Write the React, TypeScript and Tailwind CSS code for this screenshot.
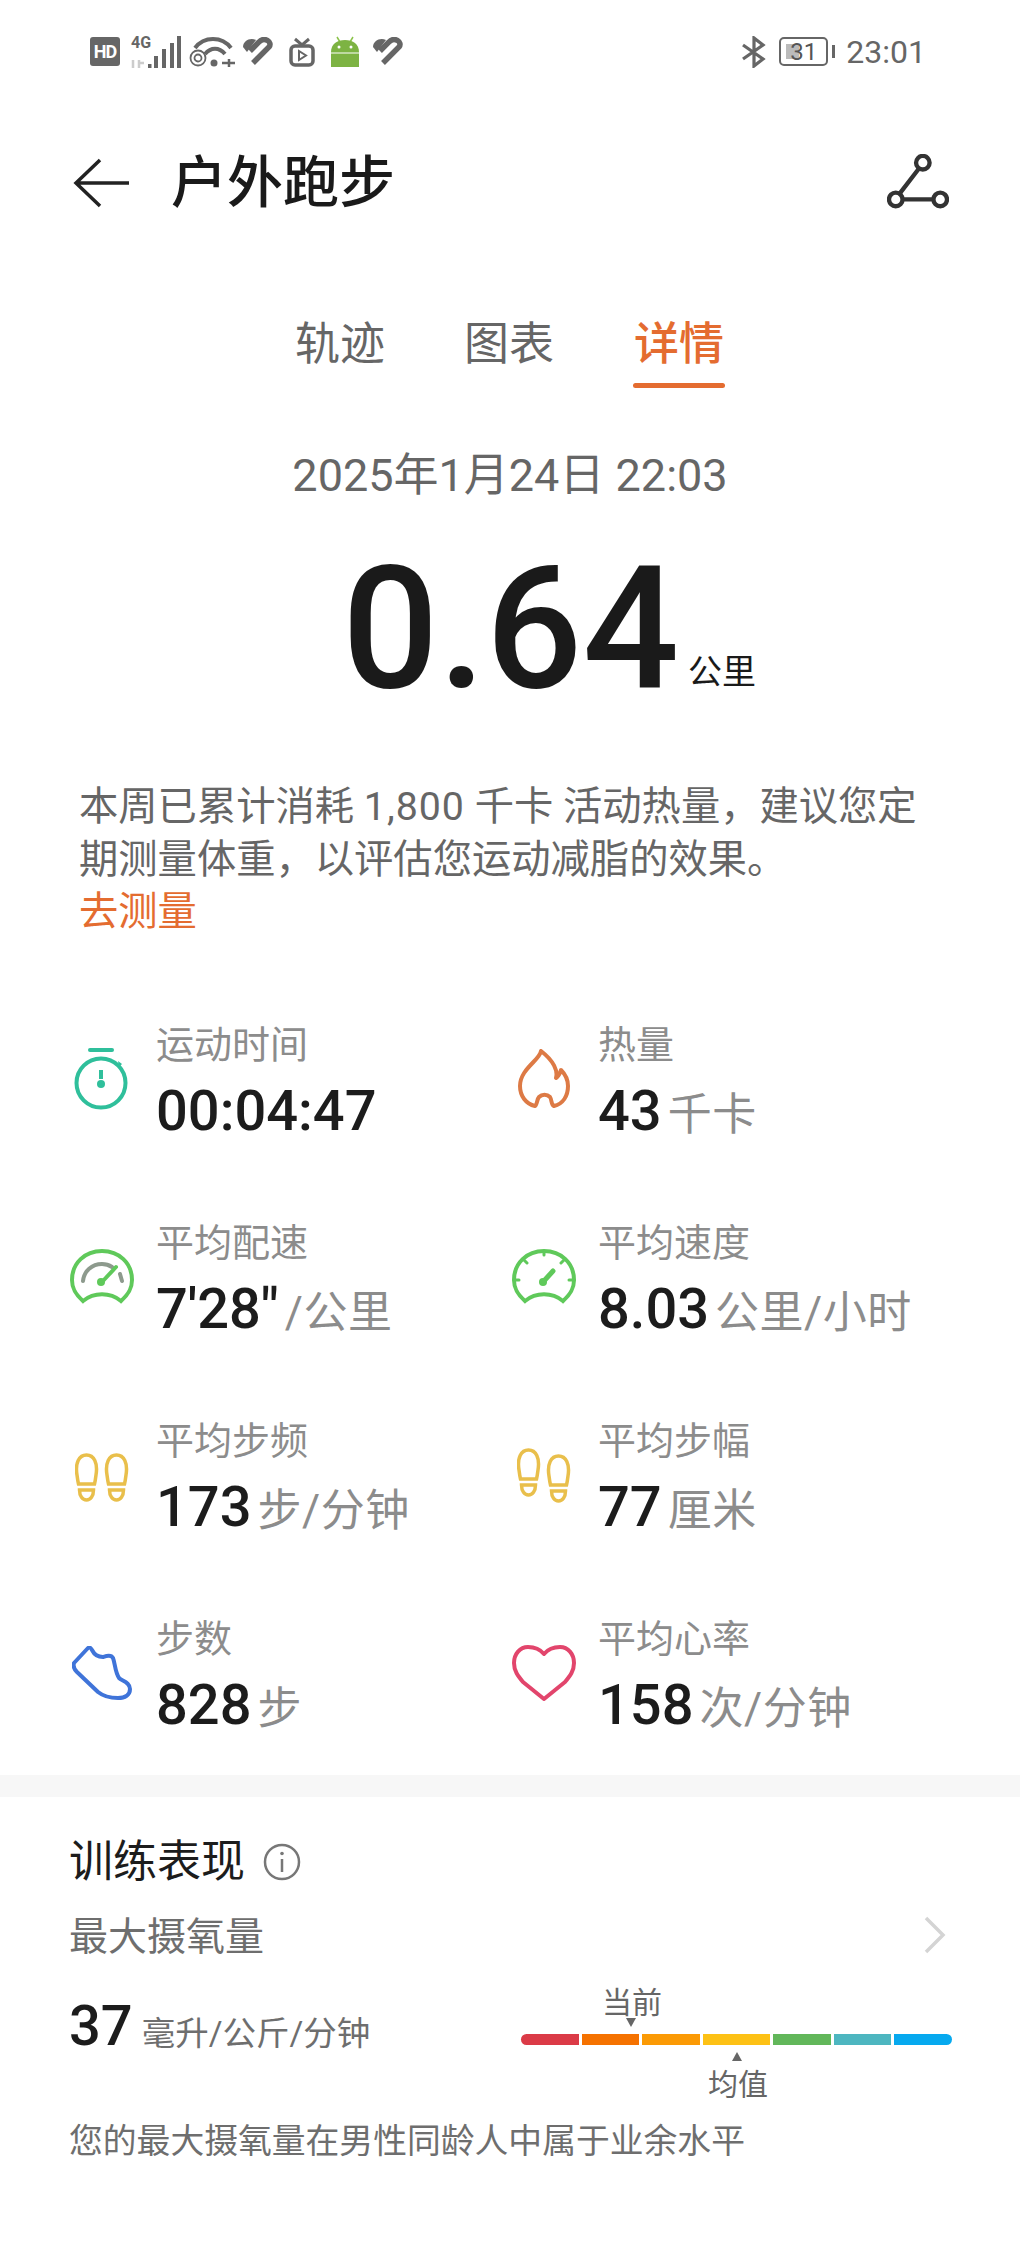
import React from 'react';

const font = { fontFamily: 'Roboto, "Noto Sans CJK SC", sans-serif' };

const HeartStripe: React.FC = () => (
  <svg width="33" height="29" viewBox="0 0 33 29" className="shrink-0">
    <path d="M1 10C1 4 8 0 14 3L5 15Z" fill="#666" />
    <path d="M11 26 27 10C31 5 22-1 17 5L8 14" fill="none" stroke="#666" strokeWidth="5.500" />
  </svg>
);

const StatusBar: React.FC = () => (
  <div className="h-[100px] pt-[3px] flex justify-between items-center pl-[90px] pr-[94px]">
    <div className="flex items-center">
      <div className="w-[30px] h-[29px] rounded-[3px] bg-[#666] text-white text-[18px] font-bold flex items-center justify-center leading-none tracking-tighter">HD</div>
      <div className="relative w-[52px] h-[32px] ml-[10px]">
        <span className="absolute left-[1px] -top-[1px] text-[#666] text-[16px] font-bold leading-[16px]">4G</span>
        <svg width="52" height="32" viewBox="0 0 52 32" className="absolute left-0 top-0">
          <path d="M3 32v-8M9 32v-8M9 27h5" stroke="#ccc" strokeWidth="2.500" />
          <rect x="18" y="28" width="3.500" height="4" fill="#666" />
          <rect x="24" y="20" width="4" height="12" fill="#666" />
          <rect x="32" y="13" width="4" height="19" fill="#666" />
          <rect x="40" y="7" width="4" height="25" fill="#666" />
          <rect x="47" y="0" width="4" height="32" fill="#666" />
        </svg>
      </div>
      <svg width="46" height="32" viewBox="0 0 46 32" className="ml-[7px]">
        <g fill="none" stroke="#666">
          <path d="M6 12C15 0 33 0 42 12" strokeWidth="4" />
          <path d="M16 18C22 11 30 11 36 18" strokeWidth="4" />
          <circle cx="9" cy="22" r="7.500" strokeWidth="1.800" />
          <circle cx="9" cy="22" r="3.500" strokeWidth="1.800" />
        </g>
        <circle cx="25" cy="27" r="3.500" fill="#666" />
        <path d="M33 27h13M40 23v8" stroke="#666" strokeWidth="2.500" />
      </svg>
      <div className="ml-[7px]"><HeartStripe /></div>
      <svg width="26" height="30" viewBox="0 0 26 30" className="ml-[14px]">
        <path d="M6 2l7 6 7-6" fill="none" stroke="#666" strokeWidth="3" />
        <rect x="2" y="9" width="22" height="19" rx="4" fill="none" stroke="#666" strokeWidth="3.500" />
        <path d="M10 14v9l7-4.500z" fill="none" stroke="#666" strokeWidth="2" />
      </svg>
      <svg width="30" height="32" viewBox="0 0 30 32" className="ml-[15px]">
        <path d="M7 1l3 5M23 1l-3 5" stroke="#8bc34a" strokeWidth="1.500" />
        <path d="M1 16C1 8 7 4 15 4s14 4 14 12v15H1Z" fill="#7db343" />
        <circle cx="9" cy="11" r="1.500" fill="#fff" />
        <circle cx="21" cy="11" r="1.500" fill="#fff" />
        <path d="M1 17h28" stroke="#fff" strokeWidth="1" />
      </svg>
      <div className="ml-[12px]"><HeartStripe /></div>
    </div>
    <div className="flex items-center">
      <svg width="26" height="32" viewBox="0 0 26 32">
        <path d="M2 9l20 14-9 7V2l9 7L2 23" fill="none" stroke="#666" strokeWidth="3.200" />
      </svg>
      <div className="relative w-[49px] h-[29px] ml-[12px] rounded-[5px] border-2 border-[#666] flex items-center justify-center">
        <div className="absolute left-[5px] top-[5px] w-[13px] h-[15px] bg-[#bbb]" />
        <span className="relative text-[#555] text-[24px] leading-none">31</span>
      </div>
      <div className="w-[3px] h-[13px] ml-[4px] bg-[#666]" />
      <span className="ml-[11px] text-[#666] text-[32px] leading-none">23:01</span>
    </div>
  </div>
);

const Header: React.FC = () => (
  <div className="h-[166px] flex items-center justify-between pl-[73px] pr-[71px]">
    <div className="flex items-center">
      <svg width="58" height="52" viewBox="0 0 58 52">
        <path d="M56 26H3M27 3 3 26l24 23" fill="none" stroke="#222" strokeWidth="3.500" />
      </svg>
      <h1 className="ml-[40px] text-[56px] leading-none font-medium text-[#1a1a1a]">户外跑步</h1>
    </div>
    <svg width="62" height="58" viewBox="0 0 64 60">
      <g fill="none" stroke="#333" strokeWidth="4.500">
        <circle cx="37" cy="9" r="7" />
        <circle cx="9" cy="47" r="7" />
        <circle cx="55" cy="47" r="7" />
        <path d="M33 15 13 41M16 47h32" />
      </g>
    </svg>
  </div>
);

const Tabs: React.FC = () => (
  <div className="flex justify-center gap-[79px] h-[124px] pt-[49px] text-[45px] leading-[60px] text-[#666]">
    <span>轨迹</span>
    <span>图表</span>
    <div className="flex flex-col items-center">
      <span className="text-[#e46c30] font-medium">详情</span>
      <div className="w-[92px] h-[5px] mt-[8px] rounded-full bg-[#e46c30]" />
    </div>
  </div>
);

const StopwatchIcon = () => (
  <svg width="54" height="62" viewBox="0 0 54 62" className="ml-[4px]">
    <g fill="none" stroke="#2fbf9b" strokeWidth="4">
      <path d="M16 2h22" strokeLinecap="round" />
      <circle cx="27" cy="35" r="24.500" />
      <path d="M27 22v9" />
    </g>
    <path d="M44 13l4 3-3 3z" fill="#2fbf9b" />
    <circle cx="27" cy="36" r="4" fill="#2fbf9b" />
  </svg>
);

const FlameIcon = () => (
  <svg width="52" height="60" viewBox="0 0 52 60" className="ml-[6px]">
    <path
      d="M23 2C22 11 2 20 2 37c0 10 6 18 15 20 2-1 2-7 4-9 3-3 8-3 11 0 2 3 1 8 4 9 9-2 14-10 14-20 0-7-3-12-7-16-1 3-2 6-5 8 2-7-2-17-15-27Z"
      fill="none"
      stroke="#dd7a45"
      strokeWidth="4"
      strokeLinejoin="round"
    />
  </svg>
);

const PaceIcon = () => (
  <svg width="64" height="56" viewBox="0 0 64 56">
    <g fill="none" stroke="#5fc95a" strokeWidth="4" strokeLinecap="round">
      <path d="M13 52C4 44 2 38 2 31 2 14 15 2 32 2s30 12 30 29c0 7-2 13-11 21-11-9-27-9-38 0Z" />
      <path d="M13 32c1-10 9-17 19-17 4 0 7 1 10 3M50 25l2 7" stroke="#8d9a8d" />
      <path d="M32 33 46 18" />
    </g>
    <circle cx="31" cy="33" r="4" fill="#5fc95a" />
  </svg>
);

const SpeedIcon = () => (
  <svg width="64" height="56" viewBox="0 0 64 56">
    <g fill="none" stroke="#5fc95a" strokeWidth="4" strokeLinecap="round">
      <path d="M13 52C4 44 2 38 2 31 2 14 15 2 32 2s30 12 30 29c0 7-2 13-11 21-11-9-27-9-38 0Z" />
      <path d="M32 2v4M12 11l3 3M52 11l-3 3M2 31h5M62 31h-5" strokeWidth="3" />
      <path d="M31 33 41 22" strokeWidth="5" />
    </g>
    <circle cx="31" cy="33" r="4" fill="#5fc95a" />
  </svg>
);

const FeetIcon: React.FC<{ offset?: boolean }> = ({ offset }) => {
  const foot = (x: number, y: number) => (
    <g transform={`translate(${x} ${y})`} fill="none" stroke="#e9bf4b" strokeWidth="3.500">
      <path d="M2 22C0 10 4 2 11.500 2S23 10 21 22c-.5 4-1 7-1.500 9h-16C3 29 2.500 26 2 22Z" />
      <path d="M4.500 37h14c0 6-3 10-7 10s-7-4-7-10Z" />
    </g>
  );
  return (
    <svg width="54" height={offset ? 60 : 53} viewBox={offset ? '0 0 54 60' : '0 0 54 53'} className="ml-[5px] translate-y-[3px]">
      {foot(0, offset ? 0 : 1)}
      {foot(30, offset ? 6 : 1)}
    </svg>
  );
};

const ShoeIcon = () => (
  <svg width="60" height="54" viewBox="0 0 60 54" className="ml-[2px]">
    <path
      d="M2 17 16 2c2-1 3 0 4 2 2 4 6 7 11 7 3-1 8-3 10 1 2 5 2 14 6 20 3 3 11 4 11 11 0 6-5 9-12 9-10 0-15-2-20-6L5 26c-3-3-4-6-3-9Z"
      fill="none"
      stroke="#3f74d9"
      strokeWidth="4"
      strokeLinejoin="round"
    />
  </svg>
);

const HeartIcon = () => (
  <svg width="64" height="56" viewBox="0 0 64 56">
    <path
      d="M32 9C27 3 21 2 16 2 8 2 2 9 2 18c0 8 4 13 9 19l21 17 21-17c5-6 9-11 9-19 0-9-6-16-14-16-5 0-11 1-16 7Z"
      fill="none"
      stroke="#e2456c"
      strokeWidth="4"
      strokeLinejoin="round"
    />
  </svg>
);

const stats: { label: string; value: string; unit: string; icon: React.ReactNode }[] = [
  { label: '运动时间', value: '00:04:47', unit: '', icon: <StopwatchIcon /> },
  { label: '热量', value: '43', unit: '千卡', icon: <FlameIcon /> },
  { label: '平均配速', value: `7'28"`, unit: '/公里', icon: <PaceIcon /> },
  { label: '平均速度', value: '8.03', unit: '公里/小时', icon: <SpeedIcon /> },
  { label: '平均步频', value: '173', unit: '步/分钟', icon: <FeetIcon /> },
  { label: '平均步幅', value: '77', unit: '厘米', icon: <FeetIcon offset /> },
  { label: '步数', value: '828', unit: '步', icon: <ShoeIcon /> },
  { label: '平均心率', value: '158', unit: '次/分钟', icon: <HeartIcon /> },
];

const StatCell: React.FC<(typeof stats)[number]> = ({ label, value, unit, icon }) => (
  <div className="flex items-center h-[198px]">
    <div className="w-[86px] pb-[7px] flex items-center">{icon}</div>
    <div className="flex flex-col">
      <span className="text-[38px] leading-[52px] text-[#8c8c8c]">{label}</span>
      <div className="flex items-baseline h-[72px] mt-[4px] leading-[72px]">
        <span className="text-[56px] font-medium text-[#1c1c1c]">{value}</span>
        {unit && <span className="ml-[6px] text-[44px] tracking-[0.5px] text-[#8c8c8c]">{unit}</span>}
      </div>
    </div>
  </div>
);

const scale = [
  { w: 'w-[58px]', c: 'bg-[#db3b47] rounded-l-full' },
  { w: 'w-[58px]', c: 'bg-[#f57200]' },
  { w: 'w-[58px]', c: 'bg-[#fb9a05]' },
  { w: 'w-[67px]', c: 'bg-[#fdc115]' },
  { w: 'w-[58px]', c: 'bg-[#62b75a]' },
  { w: 'w-[58px]', c: 'bg-[#4db6c0]' },
  { w: 'w-[58px]', c: 'bg-[#06a9ef] rounded-r-full' },
];

const ScaleBar: React.FC = () => (
  <div className="relative w-[431px] h-[11px] flex gap-[3px]">
    {scale.map((s, i) => (
      <div key={i} className={`${s.w} h-full ${s.c}`} />
    ))}
    <div className="absolute left-[81px] -top-[49px] w-[60px] text-center text-[30px] leading-[36px] text-[#666]">当前</div>
    <div className="absolute left-[105px] -top-[16px] w-0 h-0 border-x-[5px] border-x-transparent border-t-[9px] border-t-[#666]" />
    <div className="absolute left-[211px] top-[18px] w-0 h-0 border-x-[5px] border-x-transparent border-b-[9px] border-b-[#666]" />
    <div className="absolute left-[187px] top-[33px] w-[60px] text-center text-[30px] leading-[36px] text-[#666]">均值</div>
  </div>
);

const App: React.FC = () => (
  <div className="w-[1020px] h-[2267px] bg-white overflow-hidden" style={font}>
    <StatusBar />
    <Header />
    <Tabs />
    <div className="mt-[50px] h-[72px] leading-[72px] text-center text-[45px] text-[#666]">2025年1月24日 22:03</div>
    <div className="flex justify-center items-baseline h-[268px] pl-[78px] pt-[22px]">
      <span className="text-[170px] leading-[190px] font-medium text-[#1a1a1a]">0.64</span>
      <span className="ml-[9px] -translate-y-[3px] text-[34px] text-[#1a1a1a]">公里</span>
    </div>
    <div className="pl-[79px] pt-[1px] text-[39.300px] leading-[52.500px] text-[#666]">
      <p>本周已累计消耗 <span className="tracking-[1px]">1,800</span> 千卡 活动热量，建议您定</p>
      <p>期测量体重，以评估您运动减脂的效果。</p>
      <p className="text-[#e46c30]">去测量</p>
    </div>
    <div className="grid grid-cols-[442px_1fr] pl-[70px] mt-[45px]">
      {stats.map((s) => (
        <StatCell key={s.label} {...s} />
      ))}
    </div>
    <div className="h-[22px] -mt-[1px] bg-[#f7f7f7]" />
    <div className="pl-[69px] pr-[70px] pt-[35px]">
      <div className="flex items-center h-[60px]">
        <span className="text-[44px] leading-none text-[#1c1c1c]">训练表现</span>
        <svg width="38" height="38" viewBox="0 0 38 38" className="ml-[18px]">
          <circle cx="19" cy="19" r="17" fill="none" stroke="#777" strokeWidth="2.500" />
          <path d="M19 16v13" stroke="#777" strokeWidth="2.500" />
          <circle cx="19" cy="10.500" r="1.800" fill="#777" />
        </svg>
      </div>
      <div className="flex justify-between items-center h-[60px] mt-[16px] pr-[4px]">
        <span className="text-[39px] leading-none text-[#6e6e6e]">最大摄氧量</span>
        <svg width="22" height="38" viewBox="0 0 22 38" className="-mt-[6px]">
          <path d="M2 2l17 17L2 36" fill="none" stroke="#d4d4d4" strokeWidth="3.500" />
        </svg>
      </div>
      <div className="flex justify-between items-center h-[66px] mt-[25px]">
        <div className="flex items-baseline">
          <span className="text-[56px] font-medium text-[#1c1c1c]">37</span>
          <span className="ml-[9px] text-[33.500px] text-[#6e6e6e]">毫升/公斤/分钟</span>
        </div>
        <div className="mr-[-2px] mt-[27px]"><ScaleBar /></div>
      </div>
      <p className="mt-[60px] text-[33.800px] leading-[46px] text-[#6e6e6e]">您的最大摄氧量在男性同龄人中属于业余水平</p>
    </div>
  </div>
);

export default App;
